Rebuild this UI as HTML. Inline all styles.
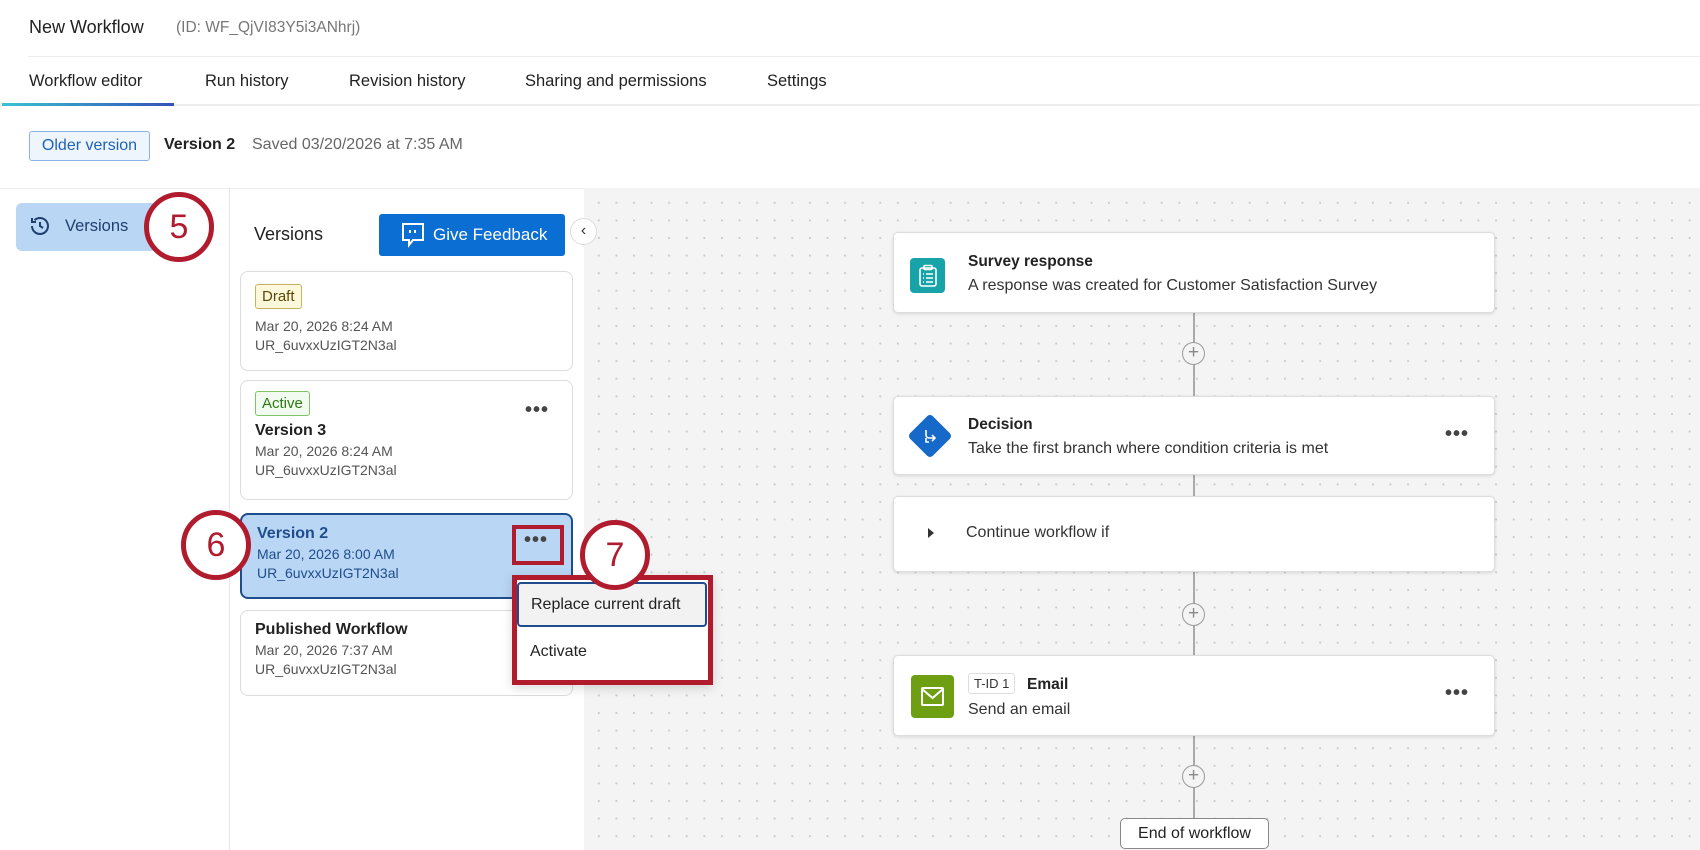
<!DOCTYPE html>
<html><head><meta charset="utf-8"><style>
*{box-sizing:border-box;margin:0;padding:0}
body{width:1700px;height:850px;overflow:hidden;background:#fff;font-family:"Liberation Sans",sans-serif;color:#32363a;position:relative}
.a{position:absolute}
.canvas{left:584px;top:188px;width:1116px;height:662px;background-color:#f4f4f4;background-image:radial-gradient(circle,#c8c8c8 0.9px,transparent 1.2px);background-size:17.6px 17.6px;background-position:6px 6px}
.card{position:absolute;left:240px;width:333px;background:#fff;border:1px solid #dcdcdc;border-radius:8px}
.sm{font-size:14px;color:#555;line-height:19px}
.tag{display:inline-block;font-size:15px;padding:3px 6px;border-radius:3px;border:1px solid}
.node{position:absolute;left:893px;width:602px;background:#fff;border:1px solid #ddd;border-radius:5px;box-shadow:0 1px 3px rgba(0,0,0,.12)}
.nt{font-size:15.5px;font-weight:bold;color:#222}
.nd{font-size:16px;color:#333}
.dots{font-size:20px;letter-spacing:1px;color:#444;font-weight:bold}
.plus{position:absolute;left:1182px;width:23px;height:23px;border:1.5px solid #999;border-radius:50%;background:#f4f4f4;color:#888;font-size:19px;line-height:19px;text-align:center}
.num{position:absolute;width:70px;height:70px;border:5px solid #b01c2e;border-radius:50%;background:#fff;color:#b01c2e;font-size:34px;text-align:center;line-height:60px}
</style></head><body>
<div class="a" style="left:29px;top:17px;font-size:18px;color:#222">New Workflow</div>
<div class="a" style="left:176px;top:19px;font-size:15.5px;color:#777">(ID: WF_QjVI83Y5i3ANhrj)</div>
<div class="a" style="left:28px;top:56px;width:1672px;height:1px;background:#eee"></div>
<div class="a" style="left:29px;top:72px;font-size:16.5px;color:#222">Workflow editor</div>
<div class="a" style="left:205px;top:72px;font-size:16.5px;color:#222">Run history</div>
<div class="a" style="left:349px;top:72px;font-size:16.5px;color:#222">Revision history</div>
<div class="a" style="left:525px;top:72px;font-size:16.5px;color:#222">Sharing and permissions</div>
<div class="a" style="left:767px;top:72px;font-size:16.5px;color:#222">Settings</div>
<div class="a" style="left:0;top:104px;width:1700px;height:2px;background:#eee"></div>
<div class="a" style="left:2px;top:103px;width:172px;height:3px;background:linear-gradient(90deg,#3ac3d0,#3550b8)"></div>
<div class="a" style="left:29px;top:131px;width:121px;height:30px;border:1px solid #8ab3e6;background:#eef5fd;border-radius:3px;color:#1d63b8;font-size:16px;line-height:28px;text-align:center">Older version</div>
<div class="a" style="left:164px;top:136px;font-size:16px;font-weight:bold;color:#222">Version 2</div>
<div class="a" style="left:252px;top:136px;font-size:16px;color:#666">Saved 03/20/2026 at 7:35 AM</div>
<div class="a" style="left:0;top:188px;width:1700px;height:1px;background:#eee"></div>
<div class="a" style="left:229px;top:188px;width:1px;height:662px;background:#e6e6e6"></div>
<div class="a canvas"></div>
<!-- sidebar -->
<div class="a" style="left:16px;top:203px;width:160px;height:48px;background:#b9d6f5;border-radius:6px"></div>
<svg class="a" style="left:28px;top:214px" width="24" height="24" viewBox="0 0 24 24" fill="none" stroke="#1f3f6e" stroke-width="2"><path d="M4 12a8 8 0 1 0 2.5-5.8"/><path d="M4 4v4h4"/><path d="M12 8v4l3 2"/></svg>
<div class="a" style="left:65px;top:217px;font-size:16.5px;color:#1f3f6e">Versions</div>
<div class="num" style="left:144px;top:192px">5</div>
<!-- versions panel -->
<div class="a" style="left:254px;top:224px;font-size:18px;color:#222">Versions</div>
<div class="a" style="left:379px;top:214px;width:186px;height:42px;background:#0b6ed3;border-radius:3px;color:#fff;font-size:17px;line-height:42px;padding-left:54px">Give Feedback</div>
<svg class="a" style="left:401px;top:222px" width="24" height="26" viewBox="0 0 24 26" fill="none" stroke="#fff" stroke-width="2"><path d="M2 2h20v16H12l-4 5v-5H2z"/><path d="M9 8v3M14 8v3"/></svg>
<div class="a" style="left:570px;top:218px;width:27px;height:27px;border:1px solid #ddd;border-radius:50%;background:#fff;font-size:16px;line-height:24px;text-align:center;color:#333">‹</div>
<div class="card" style="top:271px;height:100px;padding:12px 14px">
<span class="tag" style="background:#fdf8dc;border-color:#c6b35e;color:#5b4a05">Draft</span>
<div class="sm" style="margin-top:8px">Mar 20, 2026 8:24 AM<br>UR_6uvxxUzIGT2N3al</div></div>
<div class="card" style="top:380px;height:120px;padding:10px 14px">
<span class="tag" style="background:#f2fbef;border-color:#7fc26a;color:#2c7a15">Active</span>
<div class="a dots" style="left:284px;top:18px">•••</div>
<div style="font-size:16px;font-weight:bold;color:#222;margin-top:6px">Version 3</div>
<div class="sm" style="margin-top:2px">Mar 20, 2026 8:24 AM<br>UR_6uvxxUzIGT2N3al</div></div>
<div class="card" style="top:513px;height:86px;padding:10px 15px;background:#b9d6f5;border:2px solid #1f4d8c">
<div style="font-size:16px;font-weight:bold;color:#1f4d8c">Version 2</div>
<div class="sm" style="color:#1f4d8c;margin-top:2px">Mar 20, 2026 8:00 AM<br>UR_6uvxxUzIGT2N3al</div></div>
<div class="a" style="left:512px;top:525px;width:52px;height:40px;border:4px solid #b01c2e"></div>
<div class="a dots" style="left:524px;top:529px">•••</div>
<div class="card" style="top:610px;height:86px;padding:10px 14px">
<div style="font-size:16px;font-weight:bold;color:#222">Published Workflow</div>
<div class="sm" style="margin-top:2px">Mar 20, 2026 7:37 AM<br>UR_6uvxxUzIGT2N3al</div></div>
<div class="num" style="left:181px;top:510px">6</div>
<!-- menu -->
<div class="a" style="left:512px;top:575px;width:201px;height:110px;border:5px solid #b01c2e;background:#fff;box-shadow:0 3px 10px rgba(0,0,0,.15)"></div>
<div class="a" style="left:517px;top:582px;width:190px;height:45px;border:2px solid #1f4d8c;border-radius:4px;background:#f2f2f2;font-size:16px;line-height:41px;padding-left:12px;color:#222">Replace current draft</div>
<div class="a" style="left:530px;top:643px;font-size:16px;color:#222">Activate</div>
<div class="num" style="left:580px;top:520px">7</div>
<!-- flow -->
<div class="a" style="left:1193px;top:313px;width:1.5px;height:505px;background:#aaa"></div>
<div class="plus" style="top:342px">+</div>
<div class="plus" style="top:603px">+</div>
<div class="plus" style="top:765px">+</div>
<div class="node" style="top:232px;height:81px">
<div class="a" style="left:16px;top:25px;width:35px;height:35px;background:#17a3a8;border-radius:4px"></div>
<svg class="a" style="left:23px;top:31px" width="22" height="24" viewBox="0 0 22 24" fill="none" stroke="#fff" stroke-width="1.6"><rect x="3" y="4" width="16" height="18" rx="2"/><rect x="7" y="1.5" width="8" height="4" rx="1"/><path d="M6 10h1M9 10h7M6 14h1M9 14h7M6 18h1M9 18h7"/></svg>
<div class="a nt" style="left:74px;top:20px">Survey response</div>
<div class="a nd" style="left:74px;top:44px">A response was created for Customer Satisfaction Survey</div></div>
<div class="node" style="top:396px;height:79px">
<div class="a" style="left:20px;top:23px;width:32px;height:32px;background:#1668c9;border-radius:4px;transform:rotate(45deg)"></div>
<svg class="a" style="left:25px;top:28px" width="22" height="22" viewBox="0 0 22 22" fill="none" stroke="#fff" stroke-width="1.6"><path d="M7 5v5a3 3 0 0 0 3 3h5M13 10l3 3-3 3M7 13v4h3"/></svg>
<div class="a nt" style="left:74px;top:19px">Decision</div>
<div class="a nd" style="left:74px;top:43px">Take the first branch where condition criteria is met</div>
<div class="a dots" style="left:551px;top:26px">•••</div></div>
<div class="node" style="top:496px;height:76px">
<div class="a" style="left:34px;top:31px;width:0;height:0;border-left:6px solid #333;border-top:5px solid transparent;border-bottom:5px solid transparent"></div>
<div class="a nd" style="left:72px;top:27px">Continue workflow if</div></div>
<div class="node" style="top:655px;height:81px">
<div class="a" style="left:17px;top:19px;width:43px;height:43px;background:#6e9f12;border-radius:4px"></div>
<svg class="a" style="left:26px;top:30px" width="25" height="21" viewBox="0 0 25 21" fill="none" stroke="#fff" stroke-width="2"><rect x="2" y="2" width="21" height="17" rx="1"/><path d="M2 3l10.5 9L23 3"/></svg>
<div class="a" style="left:74px;top:17px;border:1px solid #ddd;border-radius:3px;padding:2px 5px;font-size:13px;color:#333">T-ID 1</div>
<div class="a nt" style="left:133px;top:20px">Email</div>
<div class="a nd" style="left:74px;top:45px">Send an email</div>
<div class="a dots" style="left:551px;top:26px">•••</div></div>
<div class="a" style="left:1120px;top:818px;width:149px;height:31px;background:#fff;border:1px solid #888;border-radius:5px;font-size:16px;line-height:29px;text-align:center;color:#222">End of workflow</div>
</body></html>
